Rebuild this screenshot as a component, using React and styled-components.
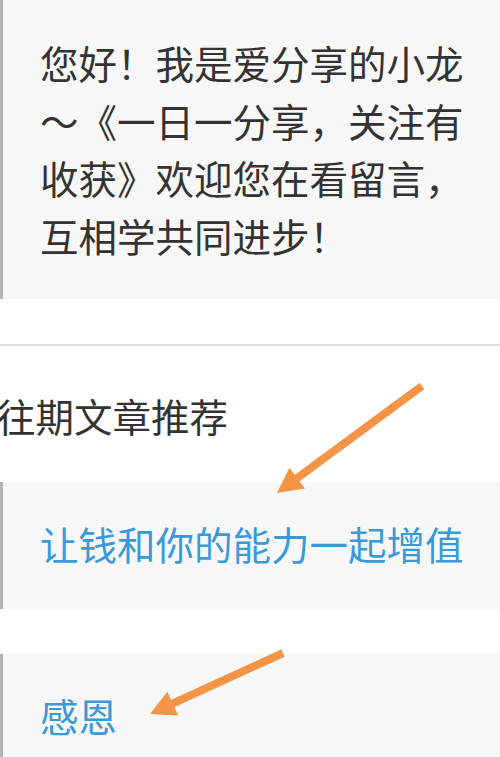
import React from 'react';
import styled, { createGlobalStyle } from 'styled-components';

const GlobalStyle = createGlobalStyle`
    html, body {
        margin: 0;
        padding: 0;
        background: #ffffff;
    }
    body {
        font-family: "Noto Sans CJK SC", "Noto Sans", sans-serif;
        color: #333333;
    }
`

const Page = styled.div`
    position: relative;
    width: 500px;
    height: 757px;
    overflow: hidden;
`

const Quote = styled.blockquote`
    margin: 0;
    margin-top: ${props => props.gap || 0}px;
    background: #f7f7f7;
    border-left: 3px solid #b3b3b3;
    padding: ${props => props.top}px 20px ${props => props.bottom}px 37px;
    font-size: 38.5px;
    line-height: 57.6px;
    font-weight: 400;
    color: ${props => props.link ? '#3a9ad9' : '#333333'};
`

const Divider = styled.hr`
    margin: 45px 0 0 0;
    border: none;
    height: 2px;
    background: #dddddd;
`

const Heading = styled.h3`
    margin: 41px 0 0 -3px;
    font-size: 38.5px;
    line-height: 57.6px;
    font-weight: 400;
    color: #333333;
`

const Overlay = styled.svg`
    position: absolute;
    top: 0;
    left: 0;
    pointer-events: none;
`

const orange = '#f39447'

const Arrow = ({ from, to }) => {
    const dx = to[0] - from[0]
    const dy = to[1] - from[1]
    const len = Math.sqrt(dx * dx + dy * dy)
    const ux = dx / len
    const uy = dy / len
    const bx = to[0] - 25 * ux
    const by = to[1] - 25 * uy
    const nx = -uy
    const ny = ux
    const points = [
        `${to[0]},${to[1]}`,
        `${bx + 13 * nx},${by + 13 * ny}`,
        `${bx - 13 * nx},${by - 13 * ny}`,
    ].join(' ')
    return (
        <g>
            <line x1={from[0]} y1={from[1]} x2={bx + ux * 2} y2={by + uy * 2} stroke={orange} strokeWidth="8" />
            <polygon points={points} fill={orange} />
        </g>
    )
}

const App = () => {
    return (
        <Page>
            <GlobalStyle />
            <Quote top={34} bottom={35}>
                您好！我是爱分享的小龙～《一日一分享，关注有收获》欢迎您在看留言，互相学共同进步！
            </Quote>
            <Divider />
            <Heading>往期文章推荐</Heading>
            <Quote link gap={37} top={33} bottom={36}>让钱和你的能力一起增值</Quote>
            <Quote link gap={45} top={33} bottom={36}>感恩</Quote>
            <Overlay width="500" height="757" viewBox="0 0 500 757">
                <Arrow from={[422, 386]} to={[277, 493]} />
                <Arrow from={[283, 653]} to={[150, 714]} />
            </Overlay>
        </Page>
    );
}

export default App;
